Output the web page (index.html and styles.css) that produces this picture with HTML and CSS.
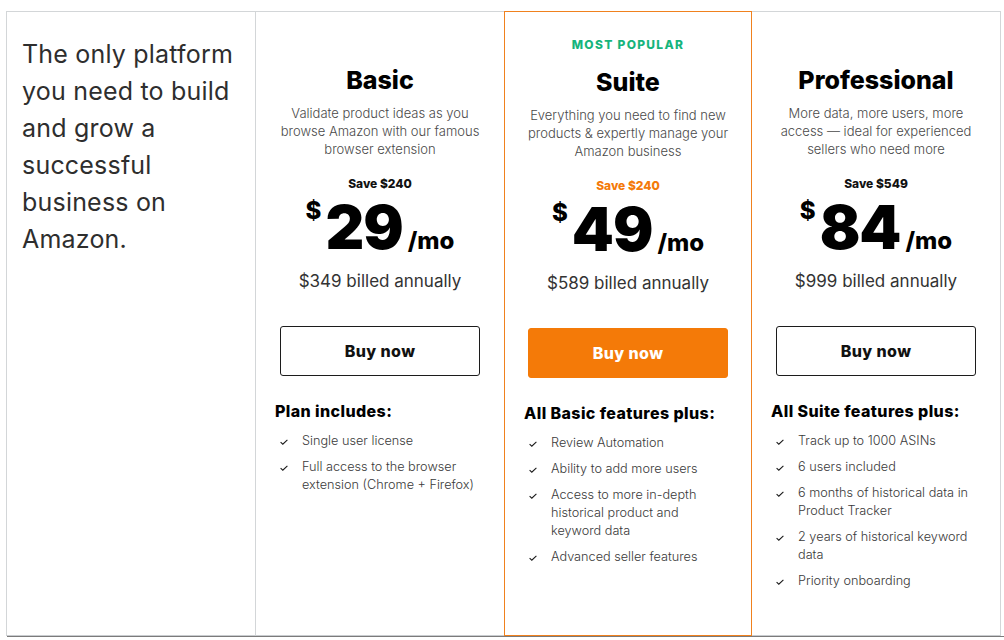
FILE: index.html
```html
<!DOCTYPE html>
<html lang="en">
<head>
<meta charset="utf-8">
<title>Pricing</title>
<link rel="stylesheet" href="styles.css">
</head>
<body>
<div class="pricing">
  <div class="col intro">
    <h1 class="intro-title">The only platform<br>you need to build<br>and grow a<br>successful<br>business on<br>Amazon.</h1>
  </div>

  <div class="col plan">
    <h2 class="plan-name">Basic</h2>
    <p class="plan-desc">Validate product ideas as you browse Amazon with our famous browser extension</p>
    <p class="save">Save $240</p>
    <div class="price"><span class="cur">$</span><span class="amt">29</span><span class="per">/mo</span></div>
    <p class="billed">$349 billed annually</p>
    <a class="btn" href="#">Buy now</a>
    <div class="features">
      <h3 class="feat-title">Plan includes:</h3>
      <ul class="feat-list">
        <li><svg class="check" viewBox="0 0 8 6"><path d="M0.6 3.2 L2.8 5.2 L7.4 0.8"/></svg><span>Single user license</span></li>
        <li><svg class="check" viewBox="0 0 8 6"><path d="M0.6 3.2 L2.8 5.2 L7.4 0.8"/></svg><span>Full access to the browser extension (Chrome + Firefox)</span></li>
      </ul>
    </div>
  </div>

  <div class="col plan featured">
    <p class="badge">MOST POPULAR</p>
    <h2 class="plan-name">Suite</h2>
    <p class="plan-desc">Everything you need to find new products &amp; expertly manage your Amazon business</p>
    <p class="save save-hot">Save $240</p>
    <div class="price"><span class="cur">$</span><span class="amt">49</span><span class="per">/mo</span></div>
    <p class="billed">$589 billed annually</p>
    <a class="btn btn-primary" href="#">Buy now</a>
    <div class="features">
      <h3 class="feat-title">All Basic features plus:</h3>
      <ul class="feat-list">
        <li><svg class="check" viewBox="0 0 8 6"><path d="M0.6 3.2 L2.8 5.2 L7.4 0.8"/></svg><span>Review Automation</span></li>
        <li><svg class="check" viewBox="0 0 8 6"><path d="M0.6 3.2 L2.8 5.2 L7.4 0.8"/></svg><span>Ability to add more users</span></li>
        <li><svg class="check" viewBox="0 0 8 6"><path d="M0.6 3.2 L2.8 5.2 L7.4 0.8"/></svg><span>Access to more in-depth historical product and keyword data</span></li>
        <li><svg class="check" viewBox="0 0 8 6"><path d="M0.6 3.2 L2.8 5.2 L7.4 0.8"/></svg><span>Advanced seller features</span></li>
      </ul>
    </div>
  </div>

  <div class="col plan last">
    <h2 class="plan-name">Professional</h2>
    <p class="plan-desc">More data, more users, more access — ideal for experienced sellers who need more</p>
    <p class="save">Save $549</p>
    <div class="price"><span class="cur">$</span><span class="amt">84</span><span class="per">/mo</span></div>
    <p class="billed">$999 billed annually</p>
    <a class="btn" href="#">Buy now</a>
    <div class="features">
      <h3 class="feat-title">All Suite features plus:</h3>
      <ul class="feat-list">
        <li><svg class="check" viewBox="0 0 8 6"><path d="M0.6 3.2 L2.8 5.2 L7.4 0.8"/></svg><span>Track up to 1000 ASINs</span></li>
        <li><svg class="check" viewBox="0 0 8 6"><path d="M0.6 3.2 L2.8 5.2 L7.4 0.8"/></svg><span>6 users included</span></li>
        <li><svg class="check" viewBox="0 0 8 6"><path d="M0.6 3.2 L2.8 5.2 L7.4 0.8"/></svg><span>6 months of historical data in Product Tracker</span></li>
        <li><svg class="check" viewBox="0 0 8 6"><path d="M0.6 3.2 L2.8 5.2 L7.4 0.8"/></svg><span>2 years of historical keyword data</span></li>
        <li><svg class="check" viewBox="0 0 8 6"><path d="M0.6 3.2 L2.8 5.2 L7.4 0.8"/></svg><span>Priority onboarding</span></li>
      </ul>
    </div>
  </div>
</div>
<div class="rule"></div>
</body>
</html>
```

FILE: styles.css
```css
* { box-sizing: border-box; }

html, body {
  margin: 0;
  padding: 0;
  background: #fff;
}

body {
  font-family: Inter, "Open Sans", "DejaVu Sans", sans-serif;
  color: #111;
}

.pricing {
  display: grid;
  grid-template-columns: 249px 249px 248px 249px;
  margin: 11px 0 0 6px;
  height: 625px;
}

.col {
  border-top: 1px solid #d3d6d8;
  border-bottom: 1px solid #c9cccf;
  border-left: 1px solid #d3d6d8;
}

.col.last {
  border-left: none;
  border-right: 1px solid #d3d6d8;
}

.col.featured {
  border: 1px solid #f0811e;
}

.intro {
  padding: 24px 4px 0 15px;
}

.intro-title {
  margin: 0;
  font-size: 25px;
  line-height: 37px;
  font-weight: 400;
  color: #2e2e2e;
  letter-spacing: 0.2px;
  white-space: nowrap;
}

.plan {
  display: flex;
  flex-direction: column;
  align-items: center;
  text-align: center;
  padding: 52px 0 0;
}

.plan.featured {
  padding-top: 24px;
}

.badge {
  margin: 1px 0 13px;
  height: 16px;
  font-size: 12px;
  line-height: 16px;
  font-weight: 800;
  letter-spacing: 1.3px;
  color: #16b47c;
}

.plan-name {
  margin: 0;
  font-size: 25px;
  line-height: 32px;
  font-weight: 800;
  color: #000;
}

.plan-desc {
  margin: 8px 0 0;
  padding: 0 18px;
  font-size: 13px;
  line-height: 18px;
  font-weight: 300;
  color: #4a4a4a;
}

.save {
  margin: 18px 0 0;
  font-size: 12px;
  line-height: 16px;
  font-weight: 800;
  color: #111;
}

.save-hot {
  color: #f47a0a;
}

.price {
  display: flex;
  justify-content: center;
  align-items: baseline;
  height: 60px;
  margin-top: 5px;
  color: #000;
  white-space: nowrap;
}

.cur {
  align-self: flex-start;
  margin: 2px 4px 0 0;
  font-size: 24px;
  line-height: 24px;
  font-weight: 800;
}

.amt {
  font-size: 60px;
  line-height: 60px;
  font-weight: 900;
  letter-spacing: -1px;
}

.per {
  margin-left: 5px;
  font-size: 24px;
  line-height: 24px;
  font-weight: 800;
}

.billed {
  margin: 12px 0 0;
  font-size: 17px;
  line-height: 24px;
  font-weight: 400;
  color: #333;
}

.btn {
  display: flex;
  align-items: center;
  justify-content: center;
  width: 200px;
  height: 50px;
  margin-top: 33px;
  border: 1px solid #1c1c1c;
  border-radius: 3px;
  font-size: 16px;
  font-weight: 800;
  letter-spacing: 0.4px;
  color: #111;
  text-decoration: none;
}

.btn-primary {
  background: #f47a08;
  border-color: #f47a08;
  color: #fff;
}

.features {
  align-self: stretch;
  text-align: left;
  padding: 0 26px 0 19px;
  margin-top: 24px;
}

.feat-title {
  margin: 0;
  font-size: 16px;
  line-height: 22px;
  font-weight: 800;
  letter-spacing: 0.4px;
  color: #000;
}

.feat-list {
  list-style: none;
  margin: 10px 0 0;
  padding: 0;
}

.feat-list li {
  display: flex;
  align-items: flex-start;
  margin-bottom: 8px;
  font-size: 12.7px;
  line-height: 18px;
  font-weight: 300;
  color: #3a3a3a;
}

.check {
  flex: none;
  width: 8px;
  height: 6px;
  margin: 7px 14px 0 5px;
  fill: none;
  stroke: #1a1a1a;
  stroke-width: 1.1;
}

.rule {
  height: 1px;
  margin-left: 7px;
  background: #7b7b7b;
}
```
